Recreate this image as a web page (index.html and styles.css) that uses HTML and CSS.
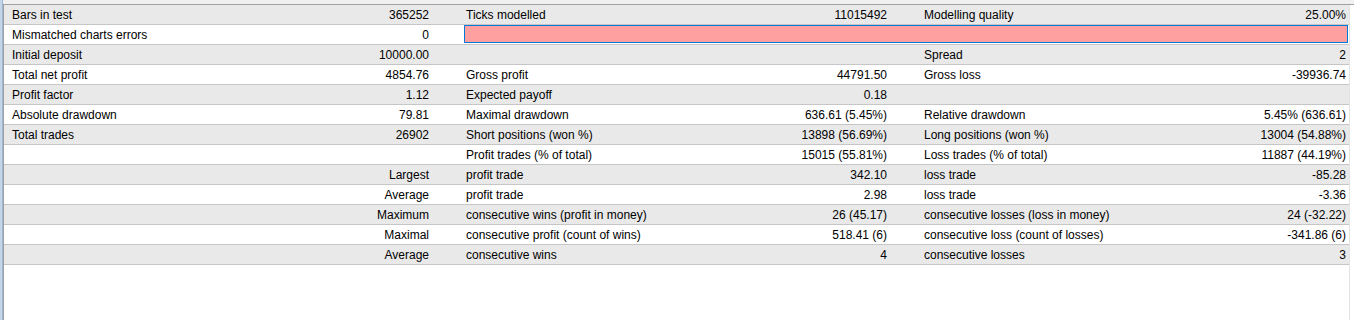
FILE: index.html
```html
<!DOCTYPE html>
<html>
<head>
<meta charset="utf-8">
<link rel="stylesheet" href="styles.css">
</head>
<body>
<div class="window">
  <div class="sidebar"></div>
  <div class="main">
    <div class="topstrip"></div>
    <div class="panel">
      <div class="report">
        <div class="row alt"><div class="l1">Bars in test</div><div class="v1">365252</div><div class="l2">Ticks modelled</div><div class="v2">11015492</div><div class="l2">Modelling quality</div><div class="v3">25.00%</div></div>
        <div class="row"><div class="l1">Mismatched charts errors</div><div class="v1">0</div><div class="quality"></div></div>
        <div class="row alt"><div class="l1">Initial deposit</div><div class="v1">10000.00</div><div class="l2"></div><div class="v2"></div><div class="l2">Spread</div><div class="v3">2</div></div>
        <div class="row"><div class="l1">Total net profit</div><div class="v1">4854.76</div><div class="l2">Gross profit</div><div class="v2">44791.50</div><div class="l2">Gross loss</div><div class="v3">-39936.74</div></div>
        <div class="row alt"><div class="l1">Profit factor</div><div class="v1">1.12</div><div class="l2">Expected payoff</div><div class="v2">0.18</div><div class="l2"></div><div class="v3"></div></div>
        <div class="row"><div class="l1">Absolute drawdown</div><div class="v1">79.81</div><div class="l2">Maximal drawdown</div><div class="v2">636.61 (5.45%)</div><div class="l2">Relative drawdown</div><div class="v3">5.45% (636.61)</div></div>
        <div class="row alt"><div class="l1">Total trades</div><div class="v1">26902</div><div class="l2">Short positions (won %)</div><div class="v2">13898 (56.69%)</div><div class="l2">Long positions (won %)</div><div class="v3">13004 (54.88%)</div></div>
        <div class="row"><div class="l1"></div><div class="v1"></div><div class="l2">Profit trades (% of total)</div><div class="v2">15015 (55.81%)</div><div class="l2">Loss trades (% of total)</div><div class="v3">11887 (44.19%)</div></div>
        <div class="row alt"><div class="l1"></div><div class="v1">Largest</div><div class="l2">profit trade</div><div class="v2">342.10</div><div class="l2">loss trade</div><div class="v3">-85.28</div></div>
        <div class="row"><div class="l1"></div><div class="v1">Average</div><div class="l2">profit trade</div><div class="v2">2.98</div><div class="l2">loss trade</div><div class="v3">-3.36</div></div>
        <div class="row alt"><div class="l1"></div><div class="v1">Maximum</div><div class="l2">consecutive wins (profit in money)</div><div class="v2">26 (45.17)</div><div class="l2">consecutive losses (loss in money)</div><div class="v3">24 (-32.22)</div></div>
        <div class="row"><div class="l1"></div><div class="v1">Maximal</div><div class="l2">consecutive profit (count of wins)</div><div class="v2">518.41 (6)</div><div class="l2">consecutive loss (count of losses)</div><div class="v3">-341.86 (6)</div></div>
        <div class="row alt"><div class="l1"></div><div class="v1">Average</div><div class="l2">consecutive wins</div><div class="v2">4</div><div class="l2">consecutive losses</div><div class="v3">3</div></div>
      </div>
      <div class="rightedge"></div>
    </div>
  </div>
</div>
</body>
</html>
```

FILE: styles.css
```css
html, body {
  margin: 0;
  padding: 0;
  background: #ffffff;
}
body {
  font-family: "Liberation Sans", Arial, sans-serif;
  font-size: 12px;
  color: #000000;
}
.window {
  display: flex;
  width: 1354px;
  height: 320px;
  overflow: hidden;
}
.sidebar {
  width: 2px;
  flex: none;
  background: #c6d6ea;
  border-right: 1px solid #9fb6d2;
}
.main {
  flex: 1;
  display: flex;
  flex-direction: column;
}
.topstrip {
  height: 4px;
  background: #f0f0f0;
}
.panel {
  flex: 1;
  display: flex;
  border-top: 1px solid #a0a0a0;
  border-left: 1px solid #a0a0a0;
  background: #ffffff;
}
.report {
  width: 1345px;
  flex: none;
  display: flex;
  flex-direction: column;
}
.rightedge {
  width: 1px;
  flex: none;
  background: #e3e3e3;
}
.row {
  display: grid;
  grid-template-columns: 225px 204px 229px 229px 229px 229px;
  height: 19px;
  line-height: 21px;
  border-bottom: 1px solid #c6c6c6;
  background: #ffffff;
  white-space: nowrap;
}
.row.alt {
  background: #e9e9e9;
}
.l1 {
  padding-left: 8px;
}
.v1 {
  text-align: right;
  padding-right: 4px;
}
.l2 {
  padding-left: 33px;
}
.v2 {
  text-align: right;
  padding-right: 4px;
}
.v3 {
  text-align: right;
  padding-right: 3px;
}
.quality {
  grid-column: 3 / 7;
  margin-left: 31px;
  margin-right: 1px;
  height: 16px;
  background: #ffa0a0;
  border: 1px solid #0078d7;
}
```
